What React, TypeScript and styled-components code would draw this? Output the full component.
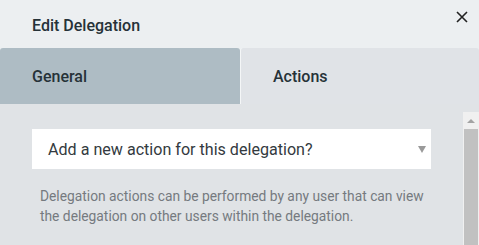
import React from "react";
import styled, { createGlobalStyle } from "styled-components";

const Global = createGlobalStyle`
  html, body { margin: 0; padding: 0; }
  body { font-family: Roboto, "Liberation Sans", Arial, sans-serif; background: #e0e3e6; }
  * { box-sizing: border-box; }
`;

const Dialog = styled.div`
  width: 479px;
  height: 245px;
  display: flex;
  flex-direction: column;
  overflow: hidden;
  background: #e0e3e6;
`;

const Header = styled.div`
  height: 48px;
  flex: none;
  display: flex;
  align-items: center;
  justify-content: space-between;
  padding: 0 7px 0 32px;
  background: #eceff1;
`;

const Title = styled.h1`
  margin: 0;
  font-size: 16px;
  font-weight: 500;
  color: #263238;
  padding-top: 3px;
`;

const CloseButton = styled.button`
  border: 0;
  background: none;
  padding: 0;
  width: 20px;
  height: 20px;
  display: flex;
  align-items: center;
  justify-content: center;
  margin-bottom: 14px;
  cursor: pointer;
`;

const Tabs = styled.div`
  height: 56px;
  flex: none;
  display: flex;
  background: #eceff1;
`;

const Tab = styled.div<{ $active?: boolean }>`
  width: ${(p) => (p.$active ? "240px" : "auto")};
  flex: ${(p) => (p.$active ? "none" : "1")};
  display: flex;
  align-items: center;
  padding-left: 32px;
  font-size: 16px;
  font-weight: 500;
  color: #263238;
  background: ${(p) => (p.$active ? "#aebcc4" : "#e0e3e7")};
  border-radius: 3px 3px 0 0;
  border-left: ${(p) => (p.$active ? "0" : "1px solid #f4f6f7")};
`;

const Body = styled.div`
  flex: 1;
  display: flex;
  min-height: 0;
`;

const Main = styled.div`
  flex: 1;
  min-width: 0;
  padding: 25px 32px 0 32px;
`;

const Select = styled.div`
  height: 40px;
  background: #fff;
  display: flex;
  align-items: center;
  justify-content: space-between;
  padding: 0 5px 0 16px;
  font-size: 16.1px;
  color: #333a40;
`;

const Caret = styled.span`
  width: 0;
  height: 0;
  border-left: 4px solid transparent;
  border-right: 4px solid transparent;
  border-top: 7px solid #9a9a9a;
`;

const Help = styled.p`
  margin: 17px -8px 0 8px;
  font-size: 13.8px;
  line-height: 20px;
  color: #757a7f;
`;

const Scrollbar = styled.div`
  width: 16px;
  flex: none;
  margin-top: 8px;
  background: #f0f0f0;
  display: flex;
  flex-direction: column;
  align-items: center;
`;

const ArrowUp = styled.div`
  height: 17px;
  flex: none;
  display: flex;
  align-items: center;
  justify-content: center;
  &::before {
    content: "";
    border-left: 4px solid transparent;
    border-right: 4px solid transparent;
    border-bottom: 4px solid #a3a3a3;
  }
`;

const Thumb = styled.div`
  width: 14px;
  flex: 1;
  background: #c1c1c1;
`;

export default function App() {
  return (
    <>
      <Global />
      <Dialog>
        <Header>
          <Title>Edit Delegation</Title>
          <CloseButton aria-label="Close">
            <svg width="12" height="12" viewBox="0 0 12 12">
              <path d="M1 1 L11 11 M11 1 L1 11" stroke="#222" strokeWidth="1.6" fill="none" />
            </svg>
          </CloseButton>
        </Header>
        <Tabs>
          <Tab $active>General</Tab>
          <Tab>Actions</Tab>
        </Tabs>
        <Body>
          <Main>
            <Select>
              <span>Add a new action for this delegation?</span>
              <Caret />
            </Select>
            <Help>
              Delegation actions can be performed by any user that can view the delegation on other users within the delegation.
            </Help>
          </Main>
          <Scrollbar>
            <ArrowUp />
            <Thumb />
          </Scrollbar>
        </Body>
      </Dialog>
    </>
  );
}
